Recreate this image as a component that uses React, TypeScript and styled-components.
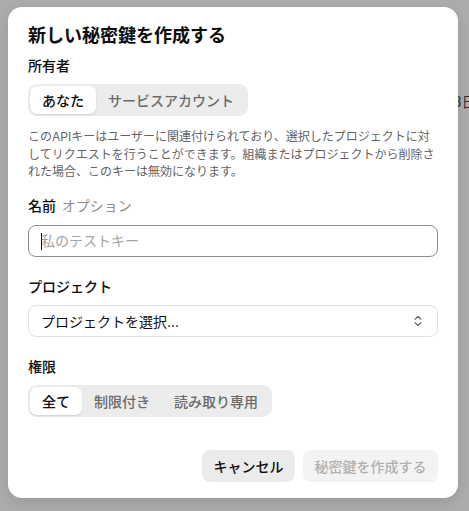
import React from "react";
import styled, { createGlobalStyle } from "styled-components";
import { ChevronsUpDown } from "lucide-react";

const GlobalStyle = createGlobalStyle`
  html, body {
    margin: 0;
    padding: 0;
    background: #adadad;
  }
  body {
    font-family: "Inter", "Noto Sans CJK JP", sans-serif;
    color: #0d0d0d;
  }
  * {
    box-sizing: border-box;
  }
`;

function App() {
  return (
    <Page>
      <GlobalStyle />
      <BehindText>3日</BehindText>
      <Dialog>
        <Title>新しい秘密鍵を作成する</Title>
        <Label>所有者</Label>
        <Segmented>
          <Segment $active>あなた</Segment>
          <Segment>サービスアカウント</Segment>
        </Segmented>
        <Description>
          このAPIキーはユーザーに関連付けられており、選択したプロジェクトに対してリクエストを行うことができます。組織またはプロジェクトから削除された場合、このキーは無効になります。
        </Description>

        <Label $spaced>
          名前 <Optional>オプション</Optional>
        </Label>
        <InputWrap>
          <Caret />
          <TextInput placeholder="私のテストキー" />
        </InputWrap>

        <Label $spaced $large>
          プロジェクト
        </Label>
        <Select>
          <span>プロジェクトを選択...</span>
          <ChevronsUpDown size={14} strokeWidth={2} color="#5d5d5d" />
        </Select>

        <Label $spaced $large>
          権限
        </Label>
        <Segmented>
          <Segment $active>全て</Segment>
          <Segment>制限付き</Segment>
          <Segment>読み取り専用</Segment>
        </Segmented>

        <Footer>
          <Button>キャンセル</Button>
          <Button $disabled>秘密鍵を作成する</Button>
        </Footer>
      </Dialog>
    </Page>
  );
}

const Page = styled.div`
  position: relative;
  min-height: 100vh;
  padding: 7px 0 0 8px;
  overflow: hidden;
`;

const BehindText = styled.div`
  position: absolute;
  left: 453px;
  top: 91px;
  white-space: nowrap;
  font-size: 14px;
  color: #2e2e2e;
`;

const Dialog = styled.div`
  position: relative;
  width: 450px;
  height: 491px;
  background: #ffffff;
  border-radius: 14px;
  padding: 17px 20px 16px;
  display: flex;
  flex-direction: column;
  box-shadow: 0 4px 16px rgba(0, 0, 0, 0.12);
`;

const Title = styled.h2`
  margin: 0;
  font-size: 18px;
  line-height: 24px;
  font-weight: 700;
  color: #0d0d0d;
`;

const Label = styled.div<{ $spaced?: boolean; $large?: boolean }>`
  margin-top: ${(p) => (p.$large ? "20px" : p.$spaced ? "15px" : "8px")};
  font-size: 14px;
  line-height: 20px;
  font-weight: 500;
  color: #0d0d0d;
`;

const Optional = styled.span`
  margin-left: 2px;
  font-weight: 400;
  color: #8f8f8f;
`;

const Segmented = styled.div`
  margin-top: 8px;
  align-self: flex-start;
  display: flex;
  padding: 2px;
  height: 32px;
  background: #ececec;
  border-radius: 9px;
`;

const Segment = styled.div<{ $active?: boolean }>`
  display: flex;
  align-items: center;
  padding: 0 12px;
  font-size: 14px;
  font-weight: 500;
  border-radius: 7px;
  color: ${(p) => (p.$active ? "#0d0d0d" : "#6b6b6b")};
  background: ${(p) => (p.$active ? "#ffffff" : "transparent")};
  box-shadow: ${(p) => (p.$active ? "0 1px 2px rgba(0,0,0,0.12)" : "none")};
`;

const Description = styled.p`
  margin: 12px 0 0;
  font-size: 12px;
  line-height: 17.6px;
  color: #636363;
`;

const InputWrap = styled.div`
  position: relative;
  margin-top: 9px;
`;

const TextInput = styled.input`
  width: 100%;
  height: 32px;
  padding: 0 12px;
  border: 1px solid #8c8c8c;
  border-radius: 8px;
  font-family: inherit;
  font-size: 14px;
  color: #0d0d0d;
  outline: none;
  &::placeholder {
    color: #a3a3a3;
  }
`;

const Caret = styled.span`
  position: absolute;
  left: 13px;
  top: 8px;
  width: 1px;
  height: 17px;
  background: #0d0d0d;
`;

const Select = styled.div`
  margin-top: 8px;
  height: 32px;
  display: flex;
  align-items: center;
  justify-content: space-between;
  padding: 0 12px;
  border: 1px solid #e0e0e0;
  border-radius: 8px;
  font-size: 14px;
  color: #0d0d0d;
`;

const Footer = styled.div`
  margin-top: auto;
  display: flex;
  justify-content: flex-end;
  gap: 8px;
`;

const Button = styled.button<{ $disabled?: boolean }>`
  height: 32px;
  padding: 0 11.5px;
  border: none;
  border-radius: 8px;
  font-family: inherit;
  font-size: 14px;
  font-weight: 500;
  color: ${(p) => (p.$disabled ? "#b0b0b0" : "#0d0d0d")};
  background: ${(p) => (p.$disabled ? "#f3f3f3" : "#ebebeb")};
  cursor: ${(p) => (p.$disabled ? "default" : "pointer")};
`;

export default App;
